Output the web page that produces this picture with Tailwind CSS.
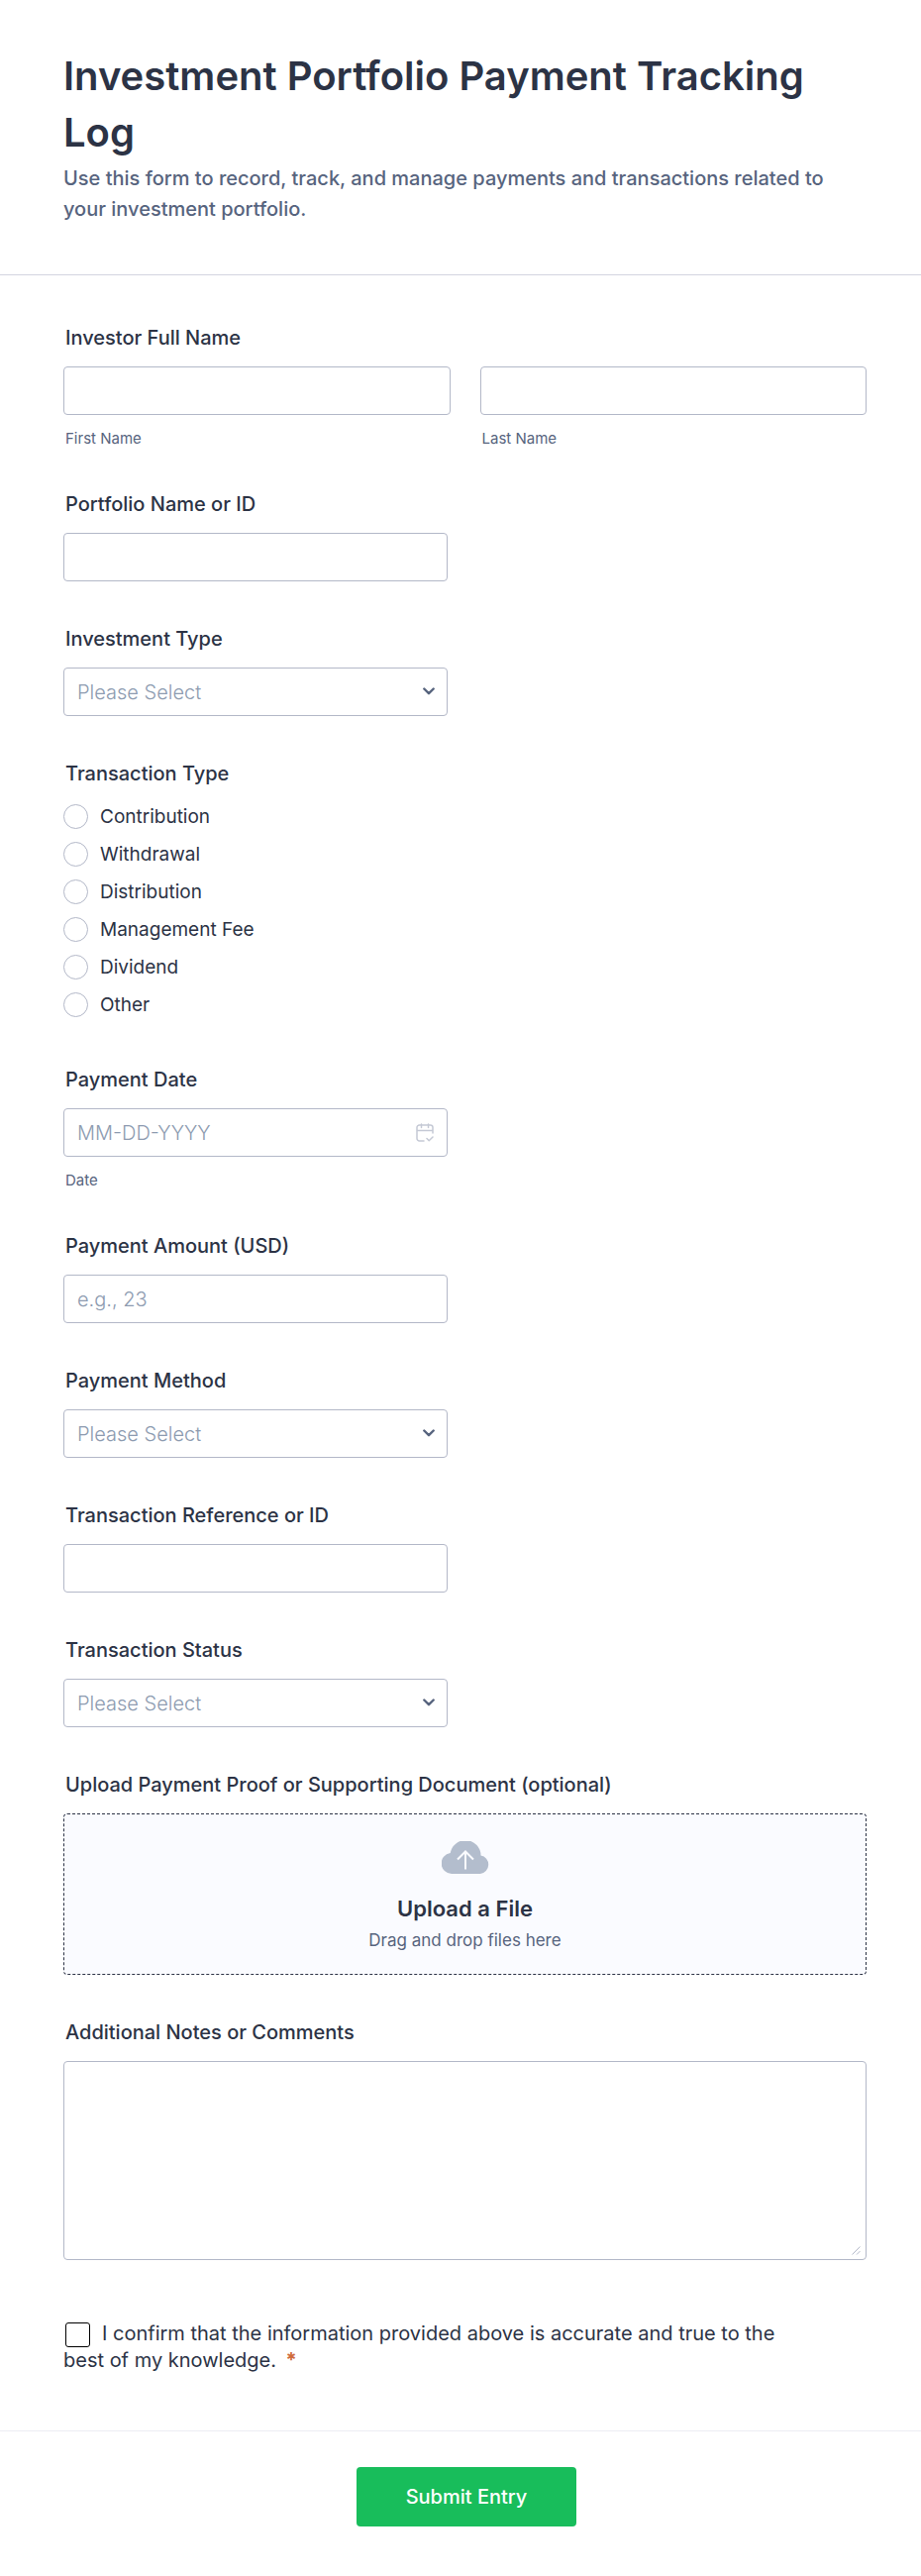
<!DOCTYPE html>
<html lang="en">
<head>
  <meta charset="UTF-8" />
  <meta name="viewport" content="width=device-width, initial-scale=1.0"/>
  <title>Investment Portfolio Payment Tracking Log</title>
  <script src="https://cdn.jsdelivr.net/npm/@tailwindcss/browser@4"></script>
</head>
<body class="bg-white text-[#2c3345] font-['Inter',sans-serif]">
  <form>
    <header class="pl-16 pr-24 pt-12 pb-[50px] border-b border-[#d3d5e0]">
      <h1 class="text-[40px] leading-[57px] font-semibold">Investment Portfolio Payment Tracking Log</h1>
      <p class="mt-[3px] text-[20px] leading-[31px] font-medium text-[#57647e]">Use this form to record, track, and manage payments and transactions related to your investment portfolio.</p>
    </header>

    <main class="flex flex-col gap-[45px] pl-16 pr-[55px] pt-[50px] pb-[57px]">
      <fieldset>
        <legend class="mb-4 pl-[2px] text-[20px] leading-[26px] font-medium">Investor Full Name</legend>
        <div class="grid grid-cols-2 gap-[30px]">
          <div>
            <input id="firstName" type="text" class="block w-full h-[49px] px-[13px] rounded border border-[#b3b8c8] bg-white text-[20px]" />
            <label for="firstName" class="block mt-4 pl-[2px] text-[15px] leading-4 text-[#57647e]">First Name</label>
          </div>
          <div>
            <input id="lastName" type="text" class="block w-full h-[49px] px-[13px] rounded border border-[#b3b8c8] bg-white text-[20px]" />
            <label for="lastName" class="block mt-4 pl-[2px] text-[15px] leading-4 text-[#57647e]">Last Name</label>
          </div>
        </div>
      </fieldset>

      <div>
        <label for="portfolio" class="block mb-4 pl-[2px] text-[20px] leading-[26px] font-medium">Portfolio Name or ID</label>
        <input id="portfolio" type="text" class="block w-full max-w-[388px] h-[49px] px-[13px] rounded border border-[#b3b8c8] bg-white text-[20px]" />
      </div>

      <div>
        <label for="investmentType" class="block mb-4 pl-[2px] text-[20px] leading-[26px] font-medium">Investment Type</label>
        <div class="relative max-w-[388px]">
          <select id="investmentType" class="block appearance-none w-full h-[49px] px-[13px] rounded border border-[#b3b8c8] bg-white text-[20px] font-light text-[#8d9bb0]">
            <option>Please Select</option>
          </select>
          <svg class="absolute right-[13px] top-[20px] w-3 h-2 pointer-events-none" viewBox="0 0 12 8" fill="none" stroke="#57647e" stroke-width="2.4" stroke-linecap="round" stroke-linejoin="round"><path d="M1.3 1.5 6 6.2l4.700-4.700"/></svg>
        </div>
      </div>

      <fieldset class="pb-[5px]">
        <legend class="mb-[18px] pl-[2px] text-[20px] leading-[26px] font-medium">Transaction Type</legend>
        <div class="flex flex-col items-start gap-[13px] text-[19px] leading-[25px]">
          <label class="flex items-center gap-3"><input type="radio" name="transactionType" class="appearance-none size-[25px] rounded-full border border-[#b3b8c8] bg-white checked:border-8" />Contribution</label>
          <label class="flex items-center gap-3"><input type="radio" name="transactionType" class="appearance-none size-[25px] rounded-full border border-[#b3b8c8] bg-white checked:border-8" />Withdrawal</label>
          <label class="flex items-center gap-3"><input type="radio" name="transactionType" class="appearance-none size-[25px] rounded-full border border-[#b3b8c8] bg-white checked:border-8" />Distribution</label>
          <label class="flex items-center gap-3"><input type="radio" name="transactionType" class="appearance-none size-[25px] rounded-full border border-[#b3b8c8] bg-white checked:border-8" />Management Fee</label>
          <label class="flex items-center gap-3"><input type="radio" name="transactionType" class="appearance-none size-[25px] rounded-full border border-[#b3b8c8] bg-white checked:border-8" />Dividend</label>
          <label class="flex items-center gap-3"><input type="radio" name="transactionType" class="appearance-none size-[25px] rounded-full border border-[#b3b8c8] bg-white checked:border-8" />Other</label>
        </div>
      </fieldset>

      <div>
        <label for="paymentDate" class="block mb-4 pl-[2px] text-[20px] leading-[26px] font-medium">Payment Date</label>
        <div class="relative max-w-[388px]">
          <input id="paymentDate" type="text" placeholder="MM-DD-YYYY" class="block w-full h-[49px] px-[13px] rounded border border-[#b3b8c8] bg-white text-[20px] font-light placeholder:text-[#8d9bb0]" />
          <svg class="absolute right-[14px] top-[15px] w-[18px] h-[19px] pointer-events-none" viewBox="0 0 18 19" fill="none" stroke="#c5c9d5" stroke-width="1.500" stroke-linecap="round" stroke-linejoin="round"><path d="M8 18H3.500A2.500 2.500 0 0 1 1 15.500v-11A2.500 2.500 0 0 1 3.500 2h11A2.500 2.500 0 0 1 17 4.500V10M1 7.500h16M5.500 1v3.500M12.500 1v3.500M11 15.500l2.200 2.200L17 14"/></svg>
        </div>
        <p class="mt-4 pl-[2px] text-[15px] leading-4 text-[#57647e]">Date</p>
      </div>

      <div>
        <label for="amount" class="block mb-4 pl-[2px] text-[20px] leading-[26px] font-medium">Payment Amount (USD)</label>
        <input id="amount" type="text" placeholder="e.g., 23" class="block w-full max-w-[388px] h-[49px] px-[13px] rounded border border-[#b3b8c8] bg-white text-[20px] font-light placeholder:text-[#8d9bb0]" />
      </div>

      <div>
        <label for="method" class="block mb-4 pl-[2px] text-[20px] leading-[26px] font-medium">Payment Method</label>
        <div class="relative max-w-[388px]">
          <select id="method" class="block appearance-none w-full h-[49px] px-[13px] rounded border border-[#b3b8c8] bg-white text-[20px] font-light text-[#8d9bb0]">
            <option>Please Select</option>
          </select>
          <svg class="absolute right-[13px] top-[20px] w-3 h-2 pointer-events-none" viewBox="0 0 12 8" fill="none" stroke="#57647e" stroke-width="2.4" stroke-linecap="round" stroke-linejoin="round"><path d="M1.3 1.5 6 6.2l4.700-4.700"/></svg>
        </div>
      </div>

      <div>
        <label for="reference" class="block mb-4 pl-[2px] text-[20px] leading-[26px] font-medium">Transaction Reference or ID</label>
        <input id="reference" type="text" class="block w-full max-w-[388px] h-[49px] px-[13px] rounded border border-[#b3b8c8] bg-white text-[20px]" />
      </div>

      <div>
        <label for="status" class="block mb-4 pl-[2px] text-[20px] leading-[26px] font-medium">Transaction Status</label>
        <div class="relative max-w-[388px]">
          <select id="status" class="block appearance-none w-full h-[49px] px-[13px] rounded border border-[#b3b8c8] bg-white text-[20px] font-light text-[#8d9bb0]">
            <option>Please Select</option>
          </select>
          <svg class="absolute right-[13px] top-[20px] w-3 h-2 pointer-events-none" viewBox="0 0 12 8" fill="none" stroke="#57647e" stroke-width="2.4" stroke-linecap="round" stroke-linejoin="round"><path d="M1.3 1.5 6 6.2l4.700-4.700"/></svg>
        </div>
      </div>

      <div>
        <p class="mb-4 pl-[2px] text-[20px] leading-[26px] font-medium">Upload Payment Proof or Supporting Document (optional)</p>
        <label for="proof" class="flex flex-col items-center pt-[27px] pb-5 rounded border border-dashed border-[#2c3345] bg-[#fafbff] cursor-pointer">
          <svg class="w-12 h-[33px]" viewBox="0 0 48 33"><path fill="#b3bdcd" d="M10 33A10.500 10.500 0 0 1 8.700 12.100 15.500 15.500 0 0 1 39.500 14.600 9.300 9.300 0 0 1 39 33z"/><path fill="none" stroke="#fafbff" stroke-width="2" d="M24 28.500V10.500M16 18.500l8-8 8 8"/></svg>
          <span class="mt-5 text-[22px] leading-[30px] font-semibold">Upload a File</span>
          <span class="mt-1 text-[17px] leading-[27px] text-[#57647e]">Drag and drop files here</span>
          <input id="proof" type="file" class="sr-only" />
        </label>
      </div>

      <div>
        <label for="notes" class="block mb-4 pl-[2px] text-[20px] leading-[26px] font-medium">Additional Notes or Comments</label>
        <div class="relative">
          <textarea id="notes" class="block w-full h-[201px] p-[13px] rounded border border-[#b3b8c8] bg-white text-[20px] resize-none"></textarea>
          <svg class="absolute right-[6px] bottom-[5px] size-[9px] pointer-events-none" viewBox="0 0 9 9" fill="none" stroke="#b3b8c8" stroke-width="1"><path d="M.5 8.500l8-8M5 8.500l3.500-3.500"/></svg>
        </div>
      </div>

      <div class="pt-4 pr-[70px] text-[20px] leading-[27px]">
        <input id="confirm" type="checkbox" required class="appearance-none align-middle size-[25px] ml-[2px] mr-3 rounded-[3px] border border-black bg-white checked:bg-black" /><label for="confirm">I confirm that the information provided above is accurate and true to the best of my knowledge. <span class="ml-1 font-bold text-[#cf6b3a]">*</span></label>
      </div>
    </main>

    <footer class="flex justify-center border-t border-[#ecedf3] pt-9 pb-[50px] pl-3">
      <button type="submit" class="h-[60px] px-[50px] rounded bg-[#18bd5b] text-[20px] text-white font-medium">Submit Entry</button>
    </footer>
  </form>
</body>
</html>
